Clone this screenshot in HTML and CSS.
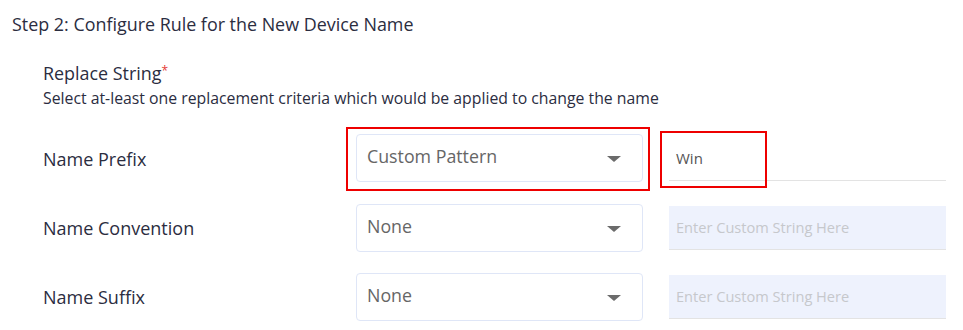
FILE: index.html
```html
<!DOCTYPE html>
<html>
<head>
<meta charset="utf-8">
<link rel="stylesheet" href="styles.css">
</head>
<body>
<div class="page">
  <h2 class="step-title">Step 2: Configure Rule for the New Device Name</h2>
  <div class="section">
    <div class="section-head">
      <div class="section-title">Replace String<span class="req">*</span></div>
      <div class="section-desc">Select at-least one replacement criteria which would be applied to change the name</div>
    </div>
    <div class="rows">
      <div class="row">
        <div class="label">Name Prefix</div>
        <div class="select-col">
          <div class="highlight">
            <div class="select"><span class="select-value">Custom Pattern</span><span class="caret"></span></div>
          </div>
        </div>
        <div class="input-col">
          <div class="text-input plain"><span class="value">Win</span><span class="mark"></span></div>
        </div>
      </div>
      <div class="row">
        <div class="label">Name Convention</div>
        <div class="select-col">
          <div class="select"><span class="select-value">None</span><span class="caret"></span></div>
        </div>
        <div class="input-col">
          <div class="text-input filled"><span class="placeholder">Enter Custom String Here</span></div>
        </div>
      </div>
      <div class="row">
        <div class="label">Name Suffix</div>
        <div class="select-col">
          <div class="select"><span class="select-value">None</span><span class="caret"></span></div>
        </div>
        <div class="input-col">
          <div class="text-input filled"><span class="placeholder">Enter Custom String Here</span></div>
        </div>
      </div>
    </div>
  </div>
</div>
</body>
</html>
```

FILE: styles.css
```css
* { box-sizing: border-box; }
html, body { margin: 0; padding: 0; background: #ffffff; }
body {
  font-family: "Open Sans", "Noto Sans", sans-serif;
  color: #2b2d3f;
}
.page {
  padding: 12px 0 0 12px;
}
.step-title {
  margin: 0;
  font-size: 17.9px;
  font-weight: 400;
  line-height: 24px;
  color: #2b2d3f;
}
.section {
  padding-left: 31px;
  padding-top: 25px;
}
.section-title {
  font-size: 17.9px;
  line-height: 24px;
  color: #2b2d3f;
}
.req {
  color: #e53935;
  font-size: 12px;
  vertical-align: top;
  position: relative;
  top: -2px;
}
.section-desc {
  font-size: 15.8px;
  line-height: 22px;
  color: #2b2d3f;
  margin-top: 2px;
}
.rows {
  margin-top: 15px;
  display: flex;
  flex-direction: column;
}
.row {
  display: flex;
  align-items: center;
  height: 69px;
}
.label {
  width: 303px;
  font-size: 18px;
  color: #2b2d3f;
}
.select-col {
  width: 314px;
  display: flex;
  align-items: center;
  padding-left: 10px;
}
.highlight {
  border: 2px solid #ee0000;
  padding: 5px 5px 7px 8px;
  margin-left: -10px;
}
.select {
  width: 287px;
  height: 48px;
  border: 1px solid #dfe6f7;
  border-radius: 4px;
  display: flex;
  align-items: center;
  justify-content: space-between;
  padding: 0 21px 0 10px;
}
.select-value {
  font-size: 17.8px;
  color: #666666;
  position: relative;
  top: -2px;
}
.caret {
  width: 0;
  height: 0;
  border-left: 7px solid transparent;
  border-right: 7px solid transparent;
  border-top: 6px solid #6b6b6b;
  margin-top: 2px;
}
.input-col {
  flex: 0 0 277px;
  margin-left: 9px;
}
.text-input {
  position: relative;
  height: 44px;
  display: flex;
  align-items: center;
  padding-left: 7px;
  border-bottom: 1px solid #e3e3e3;
}
.text-input.plain {
  background: #ffffff;
}
.text-input.filled {
  background: #eef2fd;
}
.value {
  color: #555555;
  font-size: 15px;
}
.placeholder {
  color: #c6c8cc;
  font-size: 14.6px;
}
.mark {
  position: absolute;
  left: -9px;
  top: -6px;
  width: 107px;
  height: 57px;
  border: 2px solid #ee0000;
}
```
